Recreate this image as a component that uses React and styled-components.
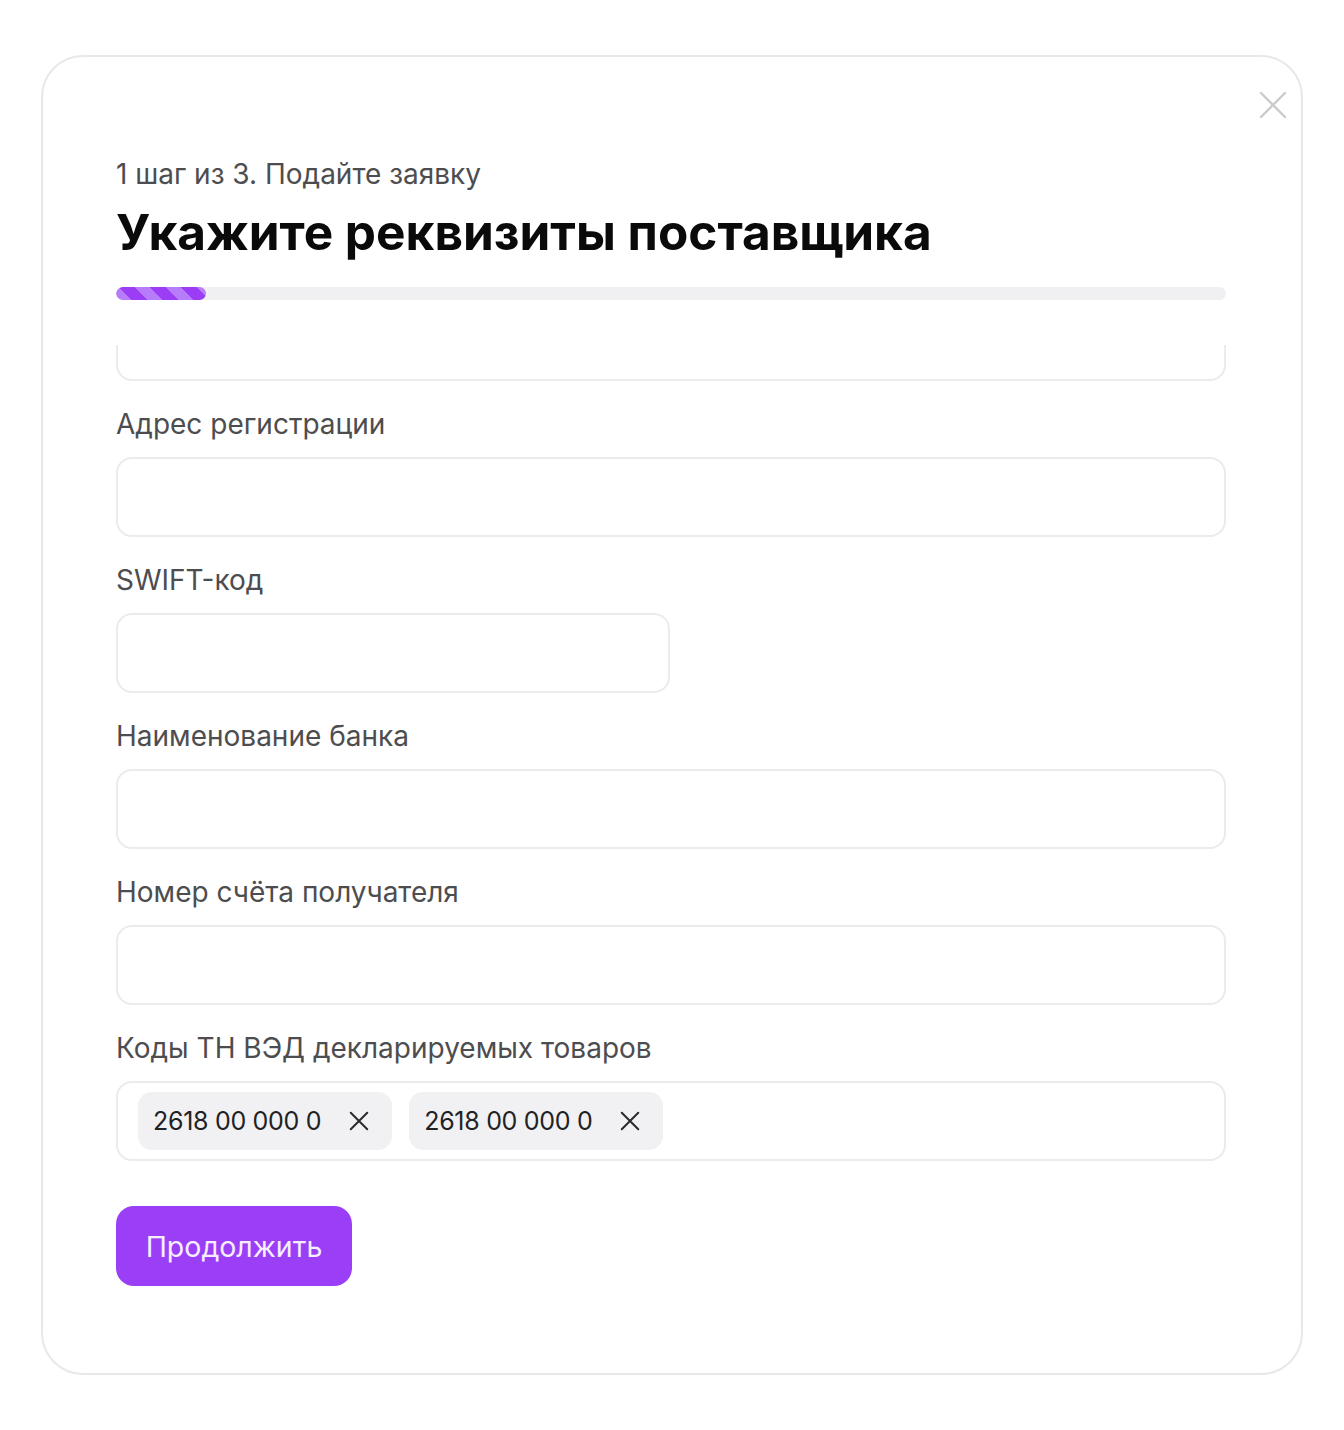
import React, { useLayoutEffect, useRef } from "react";
import styled, { createGlobalStyle } from "styled-components";

const GlobalStyle = createGlobalStyle`
  * { box-sizing: border-box; }
  body {
    margin: 0;
    background: #ffffff;
    font-family: "Inter", "Noto Sans", sans-serif;
    color: #111111;
  }
`;

const Page = styled.div`
  padding: 55px 41px 55px 41px;
`;

const Card = styled.div`
  position: relative;
  height: 1320px;
  border: 2px solid #e8e8e8;
  border-radius: 42px;
  padding: 101px 75px 0 73px;
  display: flex;
  flex-direction: column;
`;

const CloseButton = styled.button`
  position: absolute;
  top: 32px;
  right: 12px;
  width: 32px;
  height: 32px;
  padding: 0;
  border: none;
  background: none;
  cursor: pointer;
  display: flex;
  align-items: center;
  justify-content: center;
`;

const Step = styled.p`
  margin: 0;
  font-size: 28px;
  line-height: 32px;
  color: #4d4d4f;
`;

const Title = styled.h1`
  margin: 8px 0 0;
  font-size: 49.5px;
  line-height: 68px;
  font-weight: 700;
  color: #0a0a0a;
`;

const Track = styled.div`
  margin-top: 21px;
  height: 13px;
  border-radius: 7px;
  background: #f0f0f3;
  overflow: hidden;
`;

const Fill = styled.div`
  height: 100%;
  border-radius: 7px;
  background: repeating-linear-gradient(
    45deg,
    #b77cf9 0px,
    #b77cf9 11px,
    #9a3df4 11px,
    #9a3df4 22px
  );
`;

const Scroller = styled.div`
  margin-top: 45px;
  height: 816px;
  overflow: hidden;
  display: flex;
  flex-direction: column;
`;

const Field = styled.div`
  display: flex;
  flex-direction: column;
  flex-shrink: 0;
  & + & {
    margin-top: 26px;
  }
`;

const Label = styled.label`
  font-size: 28px;
  line-height: 34px;
  color: #4d4d4f;
  margin-bottom: 16px;
`;

const Input = styled.input`
  width: ${({ $half }) => ($half ? "554px" : "100%")};
  height: 80px;
  border: 2px solid #ebebed;
  border-radius: 16px;
  padding: 0 20px;
  font-family: inherit;
  font-size: 24px;
  background: #fff;
  outline: none;
`;

const TagBox = styled.div`
  height: 80px;
  border: 2px solid #ebebed;
  border-radius: 16px;
  padding: 0 20px;
  display: flex;
  align-items: center;
  gap: 17px;
`;

const Tag = styled.div`
  height: 58px;
  border-radius: 14px;
  background: #f1f1f3;
  padding: 0 22px 0 15px;
  display: flex;
  align-items: center;
  gap: 27px;
  font-size: 25px;
  color: #222224;
  letter-spacing: -0.3px;
`;

const TagRemove = styled.button`
  width: 22px;
  height: 22px;
  padding: 0;
  border: none;
  background: none;
  display: flex;
  align-items: center;
  justify-content: center;
  cursor: pointer;
`;

const Submit = styled.button`
  margin-top: 45px;
  align-self: flex-start;
  width: 236px;
  height: 80px;
  border: none;
  border-radius: 18px;
  background: #9b3ff6;
  color: #f6edff;
  font-family: inherit;
  font-size: 28.5px;
  cursor: pointer;
`;

const Cross = ({ size, color, width }) => (
  <svg width={size} height={size} viewBox="0 0 24 24" fill="none">
    <path d="M3 3L21 21M21 3L3 21" stroke={color} strokeWidth={width} strokeLinecap="round" />
  </svg>
);

// first field is scrolled mostly out of view, only its input's bottom shows
const fields = [
  { id: "company" },
  { id: "address", label: "Адрес регистрации" },
  { id: "swift", label: "SWIFT-код", half: true },
  { id: "bank", label: "Наименование банка" },
  { id: "account", label: "Номер счёта получателя" },
];

const tags = ["2618 00 000 0", "2618 00 000 0"];

export default function App() {
  const scrollRef = useRef(null);

  useLayoutEffect(() => {
    if (scrollRef.current) scrollRef.current.scrollTop = 44;
  }, []);

  return (
    <Page>
      <GlobalStyle />
      <Card>
        <CloseButton aria-label="Закрыть">
          <Cross size={32} color="#cbcbcd" width={1.8} />
        </CloseButton>
        <Step>1 шаг из 3. Подайте заявку</Step>
        <Title>Укажите реквизиты поставщика</Title>
        <Track>
          <Fill style={{ width: `${(1 / 12.3) * 100}%` }} />
        </Track>
        <Scroller ref={scrollRef}>
          {fields.map((f) => (
            <Field key={f.id}>
              {f.label && <Label>{f.label}</Label>}
              <Input $half={f.half} />
            </Field>
          ))}
          <Field>
            <Label>Коды ТН ВЭД декларируемых товаров</Label>
            <TagBox>
              {tags.map((t, i) => (
                <Tag key={i}>
                  {t}
                  <TagRemove aria-label="Удалить">
                    <Cross size={22} color="#2a2a2c" width={2.2} />
                  </TagRemove>
                </Tag>
              ))}
            </TagBox>
          </Field>
        </Scroller>
        <Submit>Продолжить</Submit>
      </Card>
    </Page>
  );
}
